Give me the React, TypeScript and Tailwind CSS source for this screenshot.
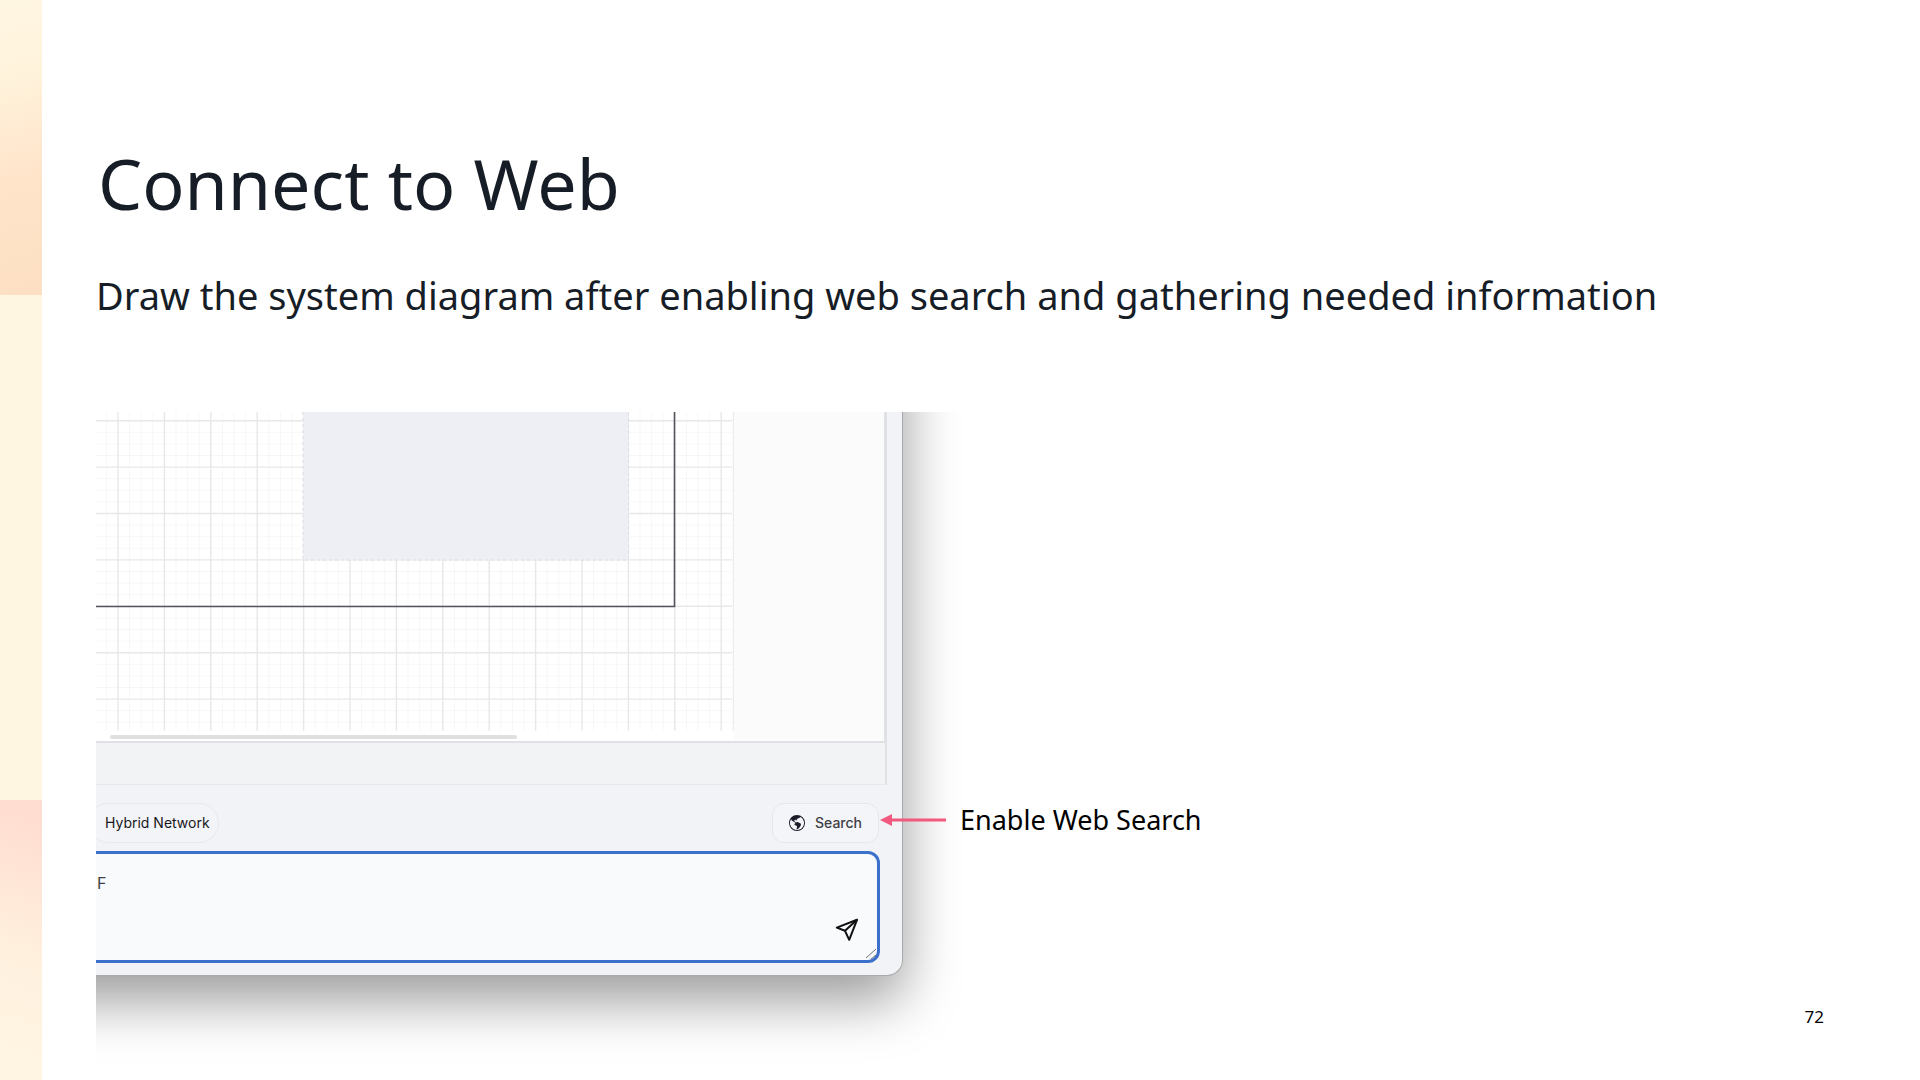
import React from 'react';
import { BsGlobeAmericas } from 'react-icons/bs';

const Stripe: React.FC = () => (
  <aside className="flex w-[42px] shrink-0 flex-col" aria-hidden>
    <div className="flex-[295] bg-linear-[165deg,#fff6e2_0%,#fff3dc_25%,#ffe4ca_60%,#fde0c3_100%]" />
    <div className="flex-[504] bg-[#fff6e2]" />
    <div className="flex-[281] bg-linear-[200deg,#ffdccf_0%,#ffe0d2_15%,#fff0de_55%,#fff5e2_90%]" />
  </aside>
);

const GRID_X = Array.from({ length: 56 }, (_, i) => i);
const GRID_Y = Array.from({ length: 28 }, (_, i) => i);

// diagram canvas: fine grid, shaded container and its outer frame
const Canvas: React.FC = () => (
  <svg width="638" height="329" viewBox="0 0 638 329" className="block shrink-0 bg-white">
    <g stroke="#000" strokeOpacity="0.03">
      {GRID_X.filter((i) => i % 4 !== 2).map((i) => (
        <path key={i} d={`M${i * 11.6 - 1.2} 0V319`} />
      ))}
      {GRID_Y.filter((i) => i % 4 !== 1).map((i) => (
        <path key={i} d={`M0 ${i * 11.6 - 2.9}H636`} />
      ))}
    </g>
    <g stroke="#e8e8e9" strokeWidth="1.4">
      {GRID_X.filter((i) => i % 4 === 2).map((i) => (
        <path key={i} d={`M${i * 11.6 - 1.2} 0V319`} />
      ))}
      {GRID_Y.filter((i) => i % 4 === 1).map((i) => (
        <path key={i} d={`M0 ${i * 11.6 - 2.9}H636`} />
      ))}
    </g>
    <rect x="207" y="-10" width="325.5" height="158" fill="#eeeff4" stroke="#dcdde2" strokeDasharray="3 3" />
    <path d="M0 194.5H578.5V0" fill="none" stroke="#55545c" strokeWidth="1.6" />
    <path d="M637.5 0V319" stroke="#ececec" />
    <rect x="14" y="323" width="407" height="4" rx="2" fill="#e0e0e1" />
  </svg>
);

const AppWindow: React.FC = () => (
  <div className="overflow-hidden pr-[60px] pb-[105px]">
    <div className="-mt-24 -ml-24 rounded-br-2xl border-r border-b border-[#a9a9ab] bg-[#f2f3f6] pt-24 pl-24 shadow-[0_24px_56px_rgba(0,0,0,0.4)]">
      <div className="mr-[15px] border-r-2 border-b border-[#dfe1e5] border-b-[#e6e8eb] bg-[#f1f3f5]">
        <div className="flex border-r border-b-2 border-[#dfe1e4] bg-[#fbfbfb]">
          <Canvas />
          <div className="w-[150px]" />
        </div>
        <div className="h-[41px]" />
      </div>
      <div className="flex items-center justify-between pt-[18px] pr-[23px] font-[Inter,sans-serif] text-sm">
        <button className="-ml-2 h-10 rounded-full border border-[#e8e9ed] bg-[#f3f4f7] pr-2 pl-4 text-[#18181b]">
          Hybrid Network
        </button>
        <button className="flex h-10 items-center gap-2.5 rounded-xl border border-[#e6e7eb] bg-[#f4f5f8] px-4 font-medium text-[#3f3f46]">
          <BsGlobeAmericas className="size-4 text-[#1b1b2a]" />
          Search
        </button>
      </div>
      <div className="relative mt-2 mr-[22px] mb-3">
        <textarea
          aria-label="Prompt"
          defaultValue="F"
          className="-ml-3 block h-28 w-[calc(100%+12px)] resize-none rounded-xl border-[3px] border-[#3b70cb] bg-[#f9fafc] px-2.5 py-[17px] font-[Inter,sans-serif] text-base text-[#3f3f46] outline-none"
        />
        <button aria-label="Send" className="absolute right-[21px] bottom-[21px]">
          <svg width="24" height="24" viewBox="0 0 24 24" fill="none" stroke="#111" strokeWidth="2" strokeLinejoin="round" className="block">
            <path d="M22 1.8 1.8 9.6 10 12.8 14.2 21.8Z" />
            <path d="M22 1.8 10 12.8" />
          </svg>
        </button>
        <svg width="12" height="12" viewBox="0 0 12 12" stroke="#6f7276" className="absolute right-[3px] bottom-[3px]">
          <path d="M1 10 11 1M6 11l5-4" />
        </svg>
      </div>
    </div>
  </div>
);

export default function App() {
  return (
    <div className="flex min-h-screen overflow-hidden bg-white font-['Noto_Sans',sans-serif] text-[#161d26]">
      <Stripe />
      <main className="relative flex-1 pt-[138px] pl-[54px]">
        <h1 className="pl-0.5 text-[70px] leading-[90px]">Connect to Web</h1>
        <p className="mt-[42px] text-[38px] leading-[50px]">
          Draw the system diagram after enabling web search and gathering needed information
        </p>
        <div className="mt-[92px] flex items-start">
          <AppWindow />
          <div className="-ml-[83px] flex items-center gap-3.5 pt-[388px] text-black">
            <svg width="66" height="14" viewBox="0 0 66 14" fill="#f2597f" className="relative">
              <path d="M0 7 12 1V13ZM11 5.5H66V8.5H11Z" />
            </svg>
            <span className="relative text-[27px] leading-10">Enable Web Search</span>
          </div>
        </div>
        <footer className="absolute right-24 bottom-[52px] text-[17px] text-black">72</footer>
      </main>
    </div>
  );
}
